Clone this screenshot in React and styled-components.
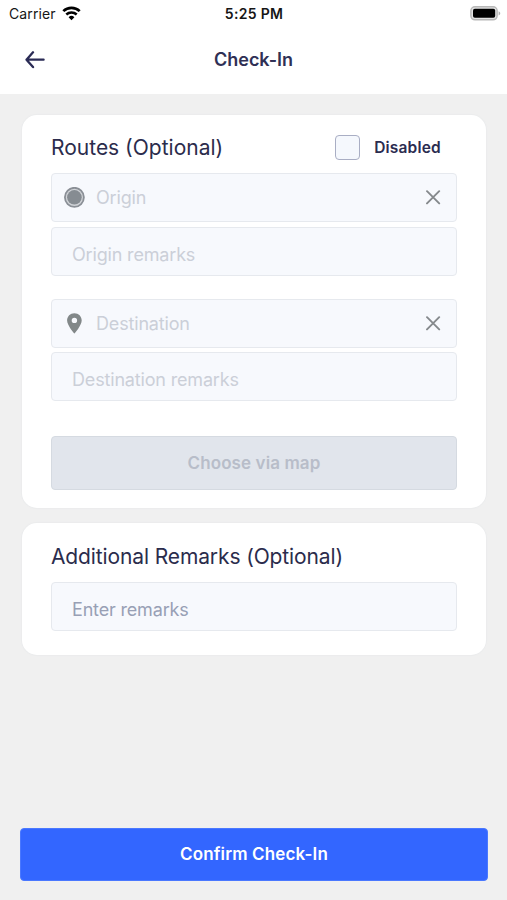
import React, { useState } from "react";
import styled, { createGlobalStyle } from "styled-components";

const App = () => {
  const [disabled, setDisabled] = useState(false);
  const [origin, setOrigin] = useState("");
  const [destination, setDestination] = useState("");

  return (
    <Screen>
      <GlobalStyle />
      <StatusBar>
        <Carrier>
          <CarrierName>Carrier</CarrierName>
          <WifiIcon />
        </Carrier>
        <Time>5:25 PM</Time>
        <BatteryIcon />
      </StatusBar>
      <Header>
        <BackButton aria-label="Back">
          <BackIcon />
        </BackButton>
        <Title>Check-In</Title>
      </Header>

      <Content>
        <Card $height={393}>
          <CardHeader>
            <CardTitle>Routes (Optional)</CardTitle>
            <Toggle>
              <Checkbox
                type="checkbox"
                checked={disabled}
                onChange={(e) => setDisabled(e.target.checked)}
              />
              <ToggleText>Disabled</ToggleText>
            </Toggle>
          </CardHeader>
          <Field>
            <OriginIcon />
            <Input
              placeholder="Origin"
              value={origin}
              onChange={(e) => setOrigin(e.target.value)}
            />
            <ClearButton aria-label="Clear" onClick={() => setOrigin("")}>
              <CloseIcon />
            </ClearButton>
          </Field>
          <Field $plain $top={5}>
            <Input placeholder="Origin remarks" />
          </Field>
          <Field $top={23}>
            <PinIcon />
            <Input
              placeholder="Destination"
              value={destination}
              onChange={(e) => setDestination(e.target.value)}
            />
            <ClearButton aria-label="Clear" onClick={() => setDestination("")}>
              <CloseIcon />
            </ClearButton>
          </Field>
          <Field $plain $top={4}>
            <Input placeholder="Destination remarks" />
          </Field>
          <MapButton disabled>Choose via map</MapButton>
        </Card>

        <Card $height={132}>
          <CardHeader $tall>
            <CardTitle $tight>Additional Remarks (Optional)</CardTitle>
          </CardHeader>
          <Field $plain>
            <Input $active placeholder="Enter remarks" />
          </Field>
        </Card>
      </Content>

      <Footer>
        <ConfirmButton>Confirm Check-In</ConfirmButton>
      </Footer>
    </Screen>
  );
};

const WifiIcon = () => (
  <svg width="19" height="15" viewBox="0 0 19 15" fill="none" stroke="#000">
    <path d="M1.3 5.1a11.8 11.8 0 0 1 16.4 0" strokeWidth="2.7" />
    <path d="M4.3 8.5a7.6 7.6 0 0 1 10.4 0" strokeWidth="2.5" />
    <path d="M9.5 14.2L6.6 11.2a4.2 4.2 0 0 1 5.8 0z" fill="#000" stroke="none" />
  </svg>
);

const BatteryIcon = () => (
  <svg width="31" height="15" viewBox="0 0 31 15">
    <rect x="0.9" y="0.8" width="26.2" height="13" rx="4" fill="#e4e4e4" stroke="#b8b8b8" strokeWidth="1.5" />
    <rect x="3" y="2.8" width="22.2" height="9" rx="1.8" fill="#000" />
    <path d="M28.6 5.2c2.2 0.8 2.2 3.4 0 4.2z" fill="#b0b0b0" />
  </svg>
);

const BackIcon = () => (
  <svg width="20" height="18" viewBox="0 0 20 18" fill="none" stroke="#2a2b55" strokeWidth="2.3" strokeLinecap="round" strokeLinejoin="round">
    <path d="M18.6 8.7H1.5M8 1.3L1.5 8.7L8 16.1" />
  </svg>
);

const OriginIcon = () => (
  <svg width="22" height="22" viewBox="0 0 22 22">
    <circle cx="10.4" cy="10.3" r="9.5" fill="#d0d3d7" stroke="#8a8f96" strokeWidth="1.8" />
    <circle cx="10.4" cy="10.3" r="7.3" fill="#868c92" />
  </svg>
);

const PinIcon = () => (
  <svg width="22" height="22" viewBox="0 0 22 22">
    <path
      d="M10.4 0.2C6.2 0.2 3.1 3.4 3.1 7.5C3.1 12.4 10.4 20.6 10.4 20.6S17.7 12.4 17.7 7.5C17.7 3.4 14.6 0.2 10.4 0.2zM10.4 4.7a2.7 2.7 0 1 1 0 5.4a2.7 2.7 0 0 1 0-5.4z"
      fill="#828889"
      fillRule="evenodd"
    />
  </svg>
);

const CloseIcon = () => (
  <svg width="16" height="16" viewBox="0 0 16 16" stroke="#85898c" strokeWidth="1.9" strokeLinecap="round">
    <path d="M2 1.2l12.2 12.2M14.2 1.2L2 13.4" />
  </svg>
);

export default App;

const GlobalStyle = createGlobalStyle`
  * {
    box-sizing: border-box;
  }
  body {
    margin: 0;
    background: #f0f0f0;
    font-family: Inter, "Liberation Sans", sans-serif;
  }
  button, input {
    font-family: inherit;
  }
  svg {
    display: block;
    flex-shrink: 0;
  }
`;
const Screen = styled.main`
  display: flex;
  flex-direction: column;
  height: 100vh;
  min-height: 900px;
  background: #f0f0f0;
`;
const StatusBar = styled.div`
  display: grid;
  grid-template-columns: 1fr auto 1fr;
  align-items: center;
  height: 27px;
  padding: 0 6px 0 9px;
  background: #fff;
  color: #161616;

  > svg {
    justify-self: end;
  }
`;
const Carrier = styled.div`
  display: flex;
  align-items: center;
  gap: 6px;
`;
const CarrierName = styled.span`
  font-size: 14px;
  letter-spacing: 0.1px;
`;
const Time = styled.span`
  margin-right: 2px;
  font-size: 14px;
  font-weight: 600;
  letter-spacing: 0.3px;
`;
const Header = styled.header`
  display: grid;
  grid-template-columns: 1fr auto 1fr;
  align-items: center;
  height: 67px;
  padding: 0 25px 2px;
  background: #fff;
`;
const BackButton = styled.button`
  justify-self: start;
  padding: 0;
  border: 0;
  background: none;
`;
const Title = styled.h1`
  margin: 0;
  font-size: 18px;
  font-weight: 600;
  color: #2f3055;
`;
const Content = styled.div`
  flex: 1;
  display: flex;
  flex-direction: column;
  gap: 15px;
  padding: 21px 21px 0 22px;
`;
const Card = styled.section`
  display: flex;
  flex-direction: column;
  height: ${(prop) => prop.$height}px;
  padding: 16px 29px 0;
  border-radius: 15px;
  background: #fff;
  box-shadow: 0 0 1px 1px #ebeced;
`;
const CardHeader = styled.div`
  display: flex;
  align-items: center;
  justify-content: space-between;
  height: 32px;
  margin-bottom: ${(prop) => (prop.$tall ? 11 : 10)}px;
  padding: ${(prop) => (prop.$tall ? "2px 0 0" : "0 16px 0 0")};
`;
const CardTitle = styled.h2`
  margin: 0;
  font-size: 21px;
  font-weight: 400;
  letter-spacing: ${(prop) => (prop.$tight ? "-0.12px" : "0")};
  white-space: nowrap;
  color: #2b2c4c;
`;
const Toggle = styled.label`
  display: flex;
  align-items: center;
  gap: 14px;
`;
const Checkbox = styled.input`
  appearance: none;
  width: 25px;
  height: 25px;
  margin: 0;
  border: 1px solid #a9aec4;
  border-radius: 4px;
  background: #f5f8fd;
`;
const ToggleText = styled.span`
  font-size: 15.5px;
  font-weight: 600;
  letter-spacing: 0.2px;
  color: #2b2c50;
`;
const Field = styled.div`
  display: flex;
  flex-shrink: 0;
  align-items: center;
  gap: 10px;
  height: 49px;
  margin-top: ${(prop) => prop.$top || 0}px;
  padding: ${(prop) => (prop.$plain ? "6px 20px 0" : "0 15px 0 12px")};
  border: 1px solid #e6e9ee;
  border-radius: 4px;
  background: #f7f9fd;
`;
const Input = styled.input`
  flex: 1;
  min-width: 0;
  padding: 0;
  border: 0;
  outline: 0;
  background: none;
  font-size: 18px;
  letter-spacing: -0.17px;
  color: #2b2c50;

  &::placeholder {
    color: ${(prop) => (prop.$active ? "#98a0b5" : "#cbcfd8")};
  }
`;
const ClearButton = styled.button`
  padding: 0;
  border: 0;
  background: none;
`;
const MapButton = styled.button`
  flex-shrink: 0;
  height: 54px;
  margin-top: 35px;
  border: 1px solid #d5dae1;
  border-radius: 4px;
  background: #e1e5ec;
  font-size: 17px;
  font-weight: 600;
  letter-spacing: 0.1px;
  color: #b8bdc9;
`;
const Footer = styled.footer`
  padding: 0 19px 19px 20px;
`;
const ConfirmButton = styled.button`
  display: block;
  width: 100%;
  height: 53px;
  padding: 0 0 1px;
  border: 1px solid #4a78ff;
  border-radius: 4px;
  background: #3366ff;
  font-size: 17px;
  font-weight: 600;
  letter-spacing: 0.15px;
  color: #fff;
`;
